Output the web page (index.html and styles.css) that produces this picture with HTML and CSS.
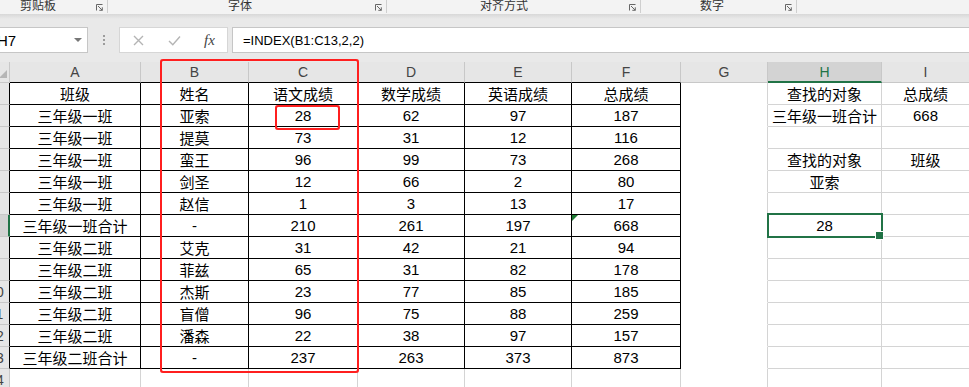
FILE: index.html
```html
<!DOCTYPE html>
<html lang="zh">
<head>
    <meta charset="UTF-8">
    <title>INDEX 函数示例</title>
    <link rel="stylesheet" href="styles.css">
</head>
<body>
    <div class="ribbon">
        <div class="group g1">
            <span class="group-label">剪贴板</span>
            <svg class="launcher" viewBox="0 0 7 7"><path d="M0.5 6.5V0.5H6.5" /><path d="M2 2L6.3 6.3M6.3 3.3V6.3H3.3" /></svg>
        </div>
        <div class="group g2">
            <span class="group-label">字体</span>
            <svg class="launcher" viewBox="0 0 7 7"><path d="M0.5 6.5V0.5H6.5" /><path d="M2 2L6.3 6.3M6.3 3.3V6.3H3.3" /></svg>
        </div>
        <div class="group g3">
            <span class="group-label">对齐方式</span>
            <svg class="launcher" viewBox="0 0 7 7"><path d="M0.5 6.5V0.5H6.5" /><path d="M2 2L6.3 6.3M6.3 3.3V6.3H3.3" /></svg>
        </div>
        <div class="group g4">
            <span class="group-label">数字</span>
            <svg class="launcher" viewBox="0 0 7 7"><path d="M0.5 6.5V0.5H6.5" /><path d="M2 2L6.3 6.3M6.3 3.3V6.3H3.3" /></svg>
        </div>
        <div class="group g5"></div>
    </div>
    <div class="shade"></div>

    <div class="formula-row">
        <div class="name-box">
            <span class="name">H7</span>
            <span class="caret"></span>
        </div>
        <div class="grip"></div>
        <div class="fx-box">
            <span class="fx-btn">
                <svg width="11" height="11" viewBox="0 0 11 11"><path d="M1 1L10 10M10 1L1 10" /></svg>
            </span>
            <span class="fx-btn">
                <svg width="13" height="11" viewBox="0 0 13 11"><path d="M1 6L4.8 9.8L12 1.5" /></svg>
            </span>
            <span class="fx-btn fx">fx</span>
        </div>
        <div class="formula-input">=INDEX(B1:C13,2,2)</div>
    </div>

    <div class="sheet" id="sheet">
        <div class="mark box-big"></div>
        <div class="mark box-cell"></div>
        <div class="selection"></div>
    </div>

    <script>
        // 表格数据
        const cols = ['A', 'B', 'C', 'D', 'E', 'F', 'G', 'H', 'I'];
        const rows = [
            ['班级', '姓名', '语文成绩', '数学成绩', '英语成绩', '总成绩', '', '查找的对象', '总成绩'],
            ['三年级一班', '亚索', '28', '62', '97', '187', '', '三年级一班合计', '668'],
            ['三年级一班', '提莫', '73', '31', '12', '116', '', '', ''],
            ['三年级一班', '蛮王', '96', '99', '73', '268', '', '查找的对象', '班级'],
            ['三年级一班', '剑圣', '12', '66', '2', '80', '', '亚索', ''],
            ['三年级一班', '赵信', '1', '3', '13', '17', '', '', ''],
            ['三年级一班合计', '-', '210', '261', '197', '668', '', '28', ''],
            ['三年级二班', '艾克', '31', '42', '21', '94', '', '', ''],
            ['三年级二班', '菲兹', '65', '31', '82', '178', '', '', ''],
            ['三年级二班', '杰斯', '23', '77', '85', '185', '', '', ''],
            ['三年级二班', '盲僧', '96', '75', '88', '259', '', '', ''],
            ['三年级二班', '潘森', '22', '38', '97', '157', '', '', ''],
            ['三年级二班合计', '-', '237', '263', '373', '873', '', '', ''],
            ['', '', '', '', '', '', '', '', '']
        ];
        const activeRow = 7;
        const activeCol = 7;

        const sheet = document.getElementById('sheet');
        const first = sheet.firstElementChild;

        function add(cls, text) {
            const el = document.createElement('div');
            el.className = cls;
            if (text) el.textContent = text;
            sheet.insertBefore(el, first);
            return el;
        }

        // 列标题
        add('corner');
        cols.forEach((c, i) => {
            let cls = 'col-head';
            if (i <= 5) cls += ' tb';
            if (i === activeCol) cls += ' active';
            add(cls, c);
        });

        // 行
        rows.forEach((row, r) => {
            const n = r + 1;
            let cls = 'row-head';
            if (n <= 13) cls += ' tb';
            if (n === activeRow) cls += ' active';
            const head = add(cls);
            const num = document.createElement('span');
            num.textContent = n;
            head.appendChild(num);

            row.forEach((v, i) => {
                let c = 'cell';
                if (n <= 13 && i <= 5) c += ' tb';
                if (n <= 13 && i === 6) c += ' blank';
                if (n === 7 && i === 5) c += ' err';
                add(c, v);
            });
        });
    </script>
</body>
</html>
```

FILE: styles.css
```css
* {
    box-sizing: border-box;
}

body {
    margin: 0;
    width: 969px;
    height: 387px;
    overflow: hidden;
    background: #e9e9e9;
    font-family: "Liberation Sans", "Noto Sans CJK SC", sans-serif;
    color: #000;
}

/* 功能区底部分组标签 */
.ribbon {
    display: flex;
    height: 14px;
    background: #f3f3f3;
    overflow: hidden;
}

.group {
    display: flex;
    align-items: flex-start;
    height: 13px;
    border-right: 1px solid #cfcfcf;
}

.g1 { width: 108px; padding-left: 20px; }
.g2 { width: 279px; padding-left: 120px; }
.g3 { width: 254px; padding-left: 93px; }
.g4 { width: 156px; padding-left: 59px; }
.g5 { flex: 1; border-right: 0; }

.group-label {
    font-family: "Noto Sans CJK SC", sans-serif;
    font-size: 12px;
    line-height: 12px;
    margin-top: -1px;
    color: #333;
}

.launcher {
    width: 7px;
    height: 7px;
    margin: 4px 4px 0 auto;
    fill: none;
    stroke: #666;
    stroke-width: 1;
}

.shade {
    height: 5px;
    background: linear-gradient(#d8d8d8, #e9e9e9);
}

/* 编辑栏 */
.formula-row {
    display: flex;
    align-items: center;
    height: 43px;
    padding: 8px 0 9px;
}

.name-box {
    width: 88px;
    height: 26px;
    background: #fff;
    border: 1px solid #c6c6c6;
    border-left: 0;
    display: flex;
    align-items: center;
    justify-content: space-between;
    padding-right: 5px;
}

.name {
    font-size: 15px;
    margin-left: -3px;
}

.caret {
    width: 0;
    height: 0;
    border-left: 4px solid transparent;
    border-right: 4px solid transparent;
    border-top: 4px solid #777;
}

.grip {
    width: 2px;
    height: 12px;
    margin-left: 15px;
    background-image: radial-gradient(circle, #9c9c9c 0.9px, transparent 1.1px);
    background-size: 2px 4px;
}

.fx-box {
    margin-left: 14px;
    width: 109px;
    height: 26px;
    background: #fff;
    border: 1px solid #d6d6d6;
    display: flex;
}

.fx-btn {
    width: 36px;
    display: flex;
    align-items: center;
    justify-content: center;
}

.fx-btn svg {
    fill: none;
    stroke: #b4b4b4;
    stroke-width: 1.4;
}

.fx {
    width: 35px;
    font-family: "Liberation Serif", serif;
    font-style: italic;
    font-size: 15px;
    color: #444;
}

.formula-input {
    margin-left: 4px;
    flex: 1;
    height: 26px;
    background: #fff;
    border: 1px solid #c6c6c6;
    border-right: 0;
    padding-left: 10px;
    font-size: 13px;
    display: flex;
    align-items: center;
}

/* 工作表 */
.sheet {
    position: relative;
    display: grid;
    grid-template-columns: 10px 131px 108px 109px 107px 107px 109px 87px 114px 88px;
    grid-template-rows: 21px repeat(14, 22px);
    background: #fff;
}

.corner,
.col-head,
.row-head {
    background: #e6e6e6;
    border-right: 1px solid #c8c8c8;
    border-bottom: 1px solid #c8c8c8;
    font-size: 14px;
    color: #444;
    display: flex;
    align-items: center;
}

.corner {
    position: relative;
}

.corner::after {
    content: '';
    position: absolute;
    right: 2px;
    bottom: 4px;
    border-left: 8px solid transparent;
    border-bottom: 8px solid #b6b6b6;
}

.col-head {
    justify-content: center;
}

.col-head.tb {
    border-bottom-color: #000;
}

.col-head.active {
    background: #d3d3d3;
    color: #217346;
    border-bottom: 2px solid #217346;
}

.row-head {
    justify-content: flex-end;
    overflow: hidden;
}

.row-head span {
    flex: none;
    width: 26px;
    text-align: center;
}

.row-head.tb {
    border-right-color: #000;
}

.row-head.active {
    background: #d3d3d3;
    border-right: 2px solid #217346;
}

.cell {
    border-right: 1px solid #d4d4d4;
    border-bottom: 1px solid #d4d4d4;
    display: flex;
    align-items: center;
    justify-content: center;
    font-size: 15px;
    white-space: nowrap;
}

.cell.tb {
    border-color: #000;
}

.cell.blank {
    border-bottom-color: transparent;
}

.cell.err {
    position: relative;
}

.cell.err::before {
    content: '';
    position: absolute;
    left: 0;
    top: 0;
    border-top: 6px solid #1e7b34;
    border-right: 6px solid transparent;
}

/* 标注框 */
.mark {
    position: absolute;
    border: 2px solid #ff1f1f;
    border-radius: 3px;
    box-shadow: 0 0 0.6px #ff1f1f, inset 0 0 0.6px #ff1f1f;
}

.box-big {
    left: 160px;
    top: -3px;
    width: 199px;
    height: 314px;
}

.box-cell {
    left: 275px;
    top: 43px;
    width: 65px;
    height: 25px;
}

.selection {
    position: absolute;
    left: 767px;
    top: 151px;
    width: 116px;
    height: 25px;
    border: 2px solid #217346;
}

.selection::after {
    content: '';
    position: absolute;
    right: -3px;
    bottom: -4px;
    width: 7px;
    height: 7px;
    background: #217346;
    border: 1px solid #fff;
}
```
